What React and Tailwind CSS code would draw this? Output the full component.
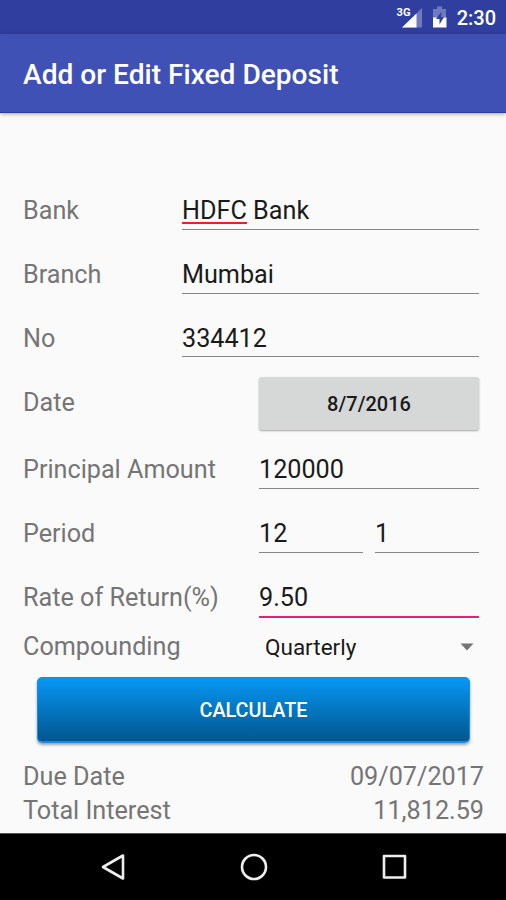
function StatusBar() {
  return (
    <div className="flex h-[34px] items-center justify-end bg-[#303f9f] pr-[10px] text-white">
      <svg width="28" height="24" viewBox="0 0 28 24" className="mr-[8px]">
        <path d="M26 3V22.500H6Z" fill="#6f7abf" />
        <path d="M20.500 8.400V22.500H6Z" fill="#fff" />
        <text x="0.500" y="11" fontFamily="Roboto, sans-serif" fontSize="11.500" fontWeight="700" fill="#fff" textLength="14" lengthAdjust="spacingAndGlyphs">3G</text>
      </svg>
      <svg width="16" height="24" viewBox="0 0 16 24" className="mr-[9px]">
        <path d="M5 1.500h5v2.500H14V13H1V4H5Z" fill="#6f7abf" />
        <path d="M1 12.500H14.500V22.500H1Z" fill="#fff" />
        <path d="M9.500 6.500L4 14H7.500V19.500L12 12H9Z" fill="#303f9f" />
      </svg>
      <span className="pt-px text-[20px] leading-6 font-medium">2:30</span>
    </div>
  );
}

function Row({ label, className, children }) {
  return (
    <div className={`flex items-start ${className}`}>
      <div className="flex-1 whitespace-nowrap text-[#757575]">{label}</div>
      {children}
    </div>
  );
}

function Field({ value, className = "", height = "h-[34px]" }) {
  return <div className={`${height} border-b border-[#858585] text-[#1a1a1a] ${className}`}>{value}</div>;
}

export default function App() {
  return (
    <div className="flex h-[900px] w-[506px] flex-col overflow-hidden bg-[#fafafa] font-[Roboto,sans-serif]">
      <StatusBar />
      <header className="flex h-[79px] items-center border-b border-[#2a3c9c] bg-[#3f51b5] pt-[5px] pl-[23px] text-[28.1px] font-medium text-white shadow-[0_1px_4px_rgba(0,0,0,0.35)]">
        Add or Edit Fixed Deposit
      </header>

      <main className="flex flex-1 flex-col pt-[83px] pr-[27px] pl-[23px] text-[25.2px] leading-[30px]">
        <Row label="Bank" className="h-16">
          <Field
            className="w-[297px]"
            value={
              <>
                <span className="inline-block h-[28px] border-b-2 border-[#f21d24]">HDFC</span> Bank
              </>
            }
          />
        </Row>
        <Row label="Branch" className="h-16">
          <Field className="w-[297px]" value="Mumbai" />
        </Row>
        <Row label="No" className="h-16">
          <Field className="w-[297px]" height="h-[33px]" value="334412" />
        </Row>
        <Row label="Date" className="h-[67px]">
          <button className="-mt-[11px] h-[53px] w-[220px] rounded-[3px] bg-[#d6d7d7] text-[20px] font-medium text-[#1a1a1a] shadow-[0_1px_2px_rgba(0,0,0,0.35)]">
            8/7/2016
          </button>
        </Row>
        <Row label="Principal Amount" className="h-16">
          <Field className="w-[220px]" value="120000" />
        </Row>
        <Row label="Period" className="h-16">
          <div className="flex w-[220px] gap-3">
            <Field className="flex-1" value="12" />
            <Field className="flex-1" value="1" />
          </div>
        </Row>
        <Row label="Rate of Return(%)" className="h-[49px]">
          <div className="h-[35px] w-[220px] border-b-2 border-[#ec1e72] text-[#1a1a1a]">9.50</div>
        </Row>
        <Row label="Compounding" className="h-[45px]">
          <div className="flex w-[214px] items-center justify-between pr-[5px] text-[22.5px] text-[#1a1a1a]">
            Quarterly
            <svg width="14" height="8" viewBox="0 0 14 8">
              <path d="M0.500 0.500H13.500L7 7.500Z" fill="#757575" />
            </svg>
          </div>
        </Row>
        <button className="mr-[9px] ml-[14px] h-[66px] shrink-0 rounded-[5px] border border-b-2 border-[#158bee] bg-linear-to-b from-[#0798f6] to-[#02568e] pt-[3px] text-[19.8px] font-medium text-white shadow-[0_2px_3px_rgba(0,0,0,0.35)]">
          CALCULATE
        </button>
        <div className="-mr-[5px] flex justify-between pt-[17px] leading-[34px] text-[#757575]">
          <span>Due Date</span>
          <span>09/07/2017</span>
        </div>
        <div className="-mr-[5px] flex justify-between leading-[34px] text-[#757575]">
          <span>Total Interest</span>
          <span>11,812.59</span>
        </div>
      </main>

      <nav className="flex h-[67px] shrink-0 items-center justify-between border-t border-[#555] bg-black pr-[98px] pl-[99px]">
        <svg width="28" height="30" viewBox="0 0 28 30" fill="none" stroke="#eee" strokeWidth="2.600" strokeLinejoin="round">
          <path d="M24 3.500V26.500L4 15Z" />
        </svg>
        <svg width="28" height="30" viewBox="0 0 28 30" fill="none" stroke="#eee" strokeWidth="2.600">
          <circle cx="14" cy="15" r="12" />
        </svg>
        <svg width="28" height="30" viewBox="0 0 28 30" fill="none" stroke="#eee" strokeWidth="2.600" strokeLinejoin="round">
          <path d="M4 4H25V25.500H4Z" />
        </svg>
      </nav>
    </div>
  );
}
